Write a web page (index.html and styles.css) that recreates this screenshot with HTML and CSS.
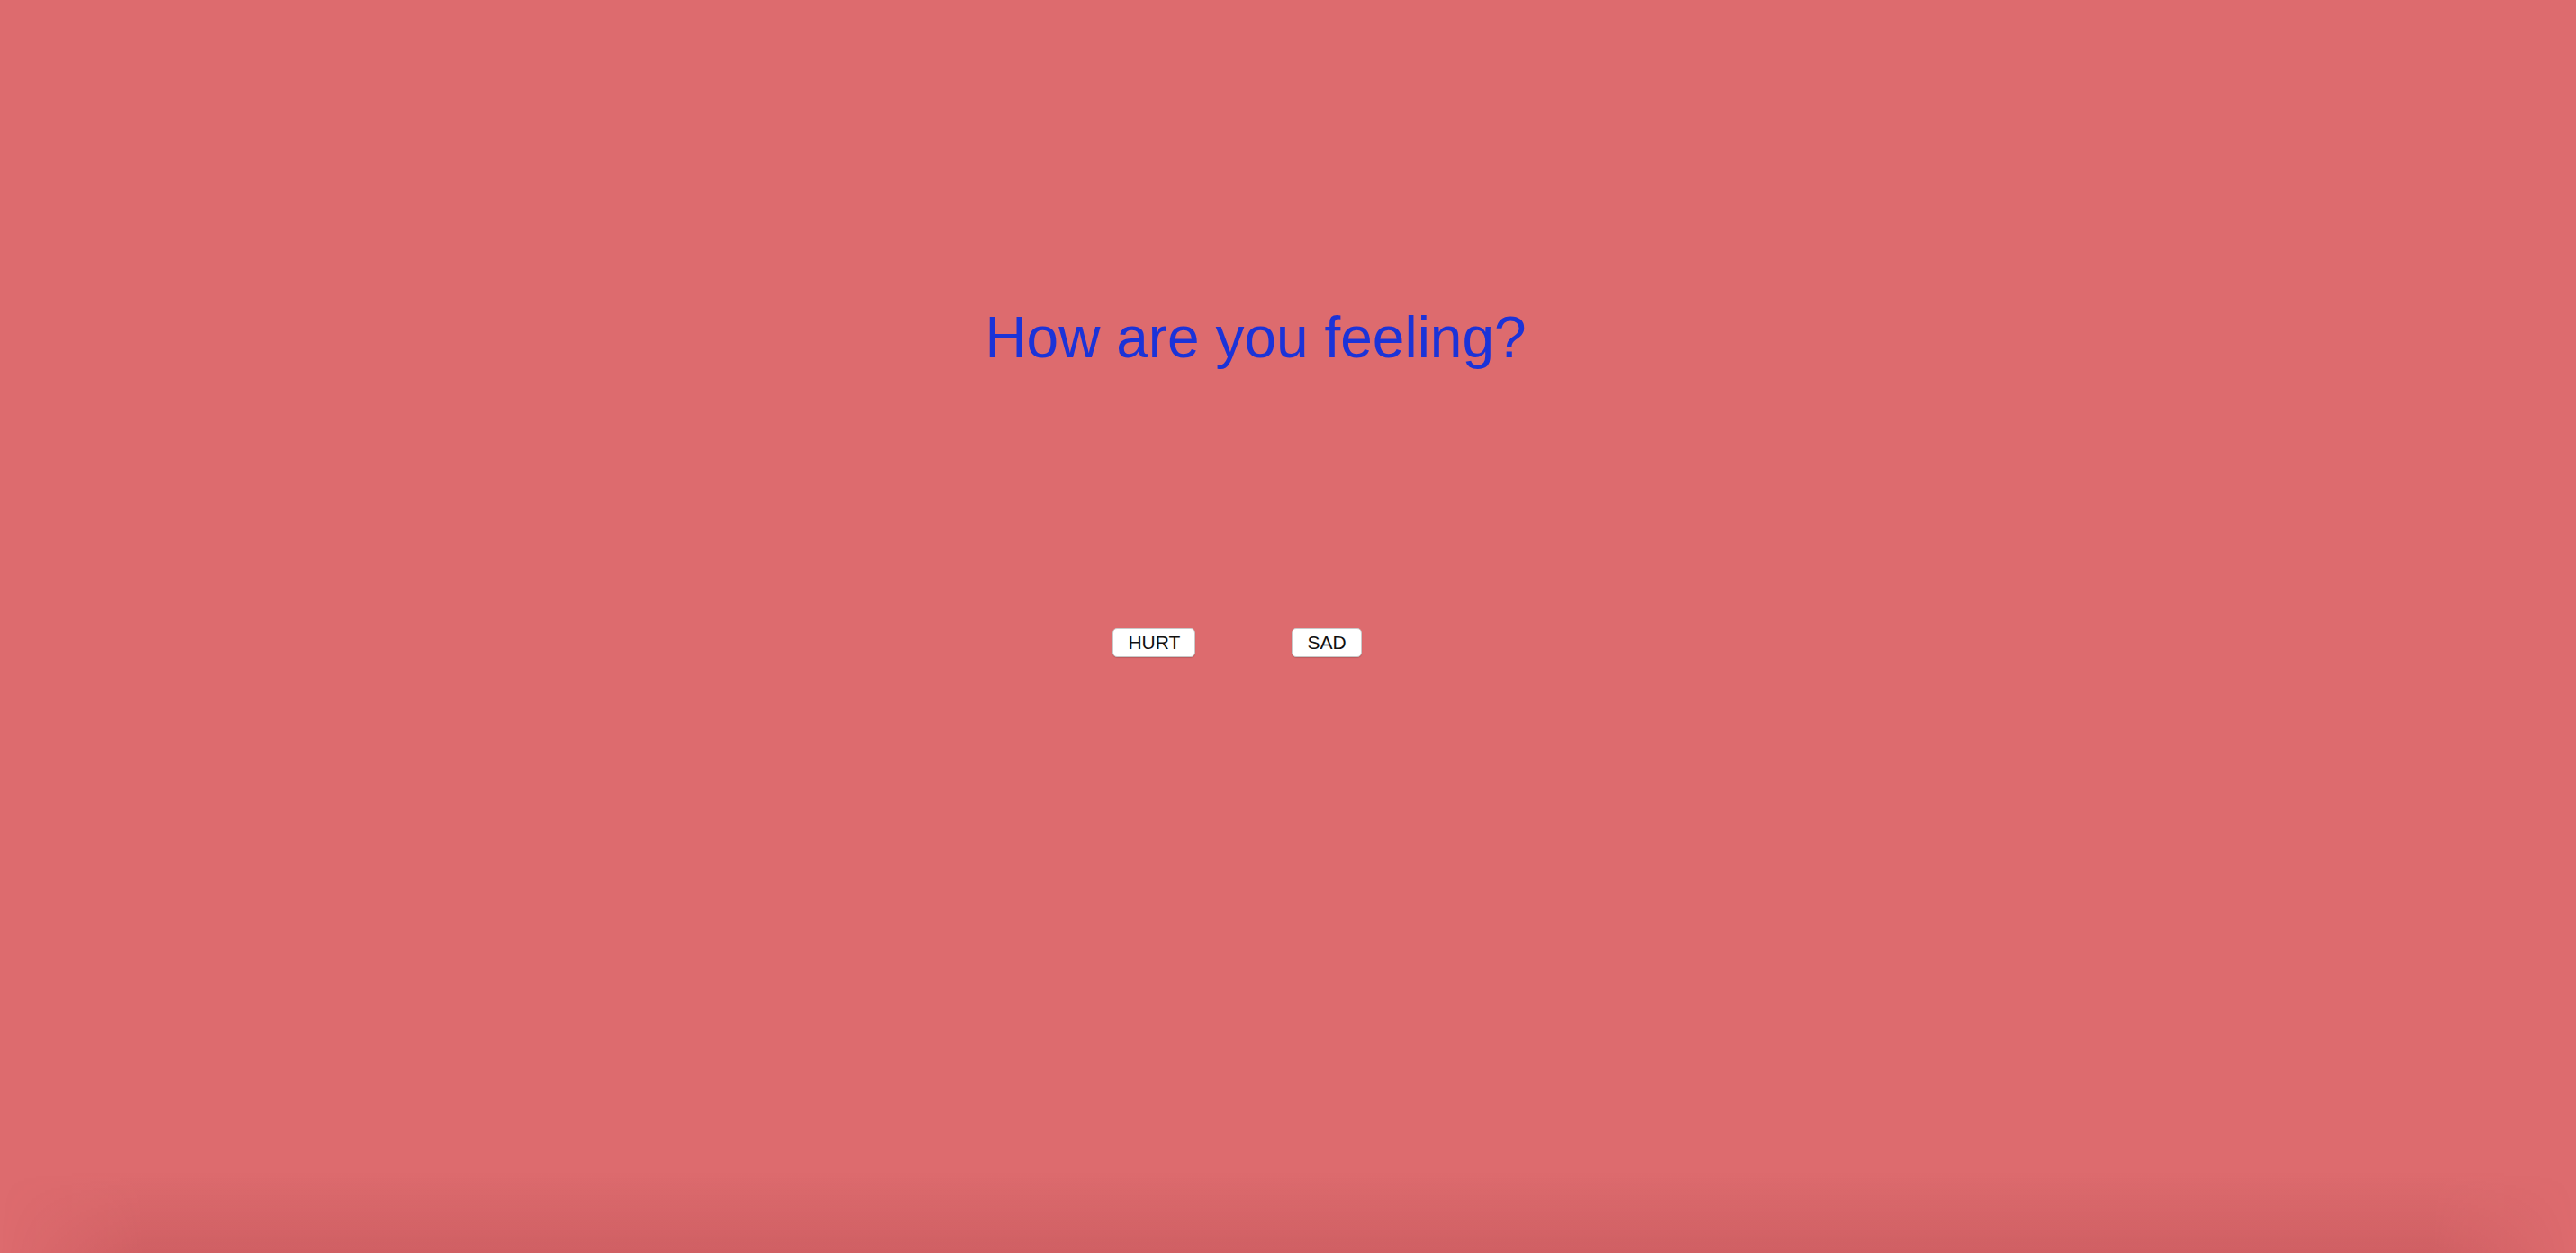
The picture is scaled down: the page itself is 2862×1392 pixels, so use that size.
FILE: index.html
```html
<!DOCTYPE html>
<html lang="en">
<head>
<meta charset="utf-8">
<title>How are you feeling?</title>
<link rel="stylesheet" href="styles.css">
</head>
<body>
<main class="page">
  <h1 class="question">How are you feeling?</h1>
  <div class="choices">
    <button class="choice" type="button">HURT</button>
    <button class="choice" type="button">SAD</button>
  </div>
</main>
<div class="bottom-shade"></div>
</body>
</html>
```

FILE: styles.css
```css
html, body {
  margin: 0;
  padding: 0;
  height: 100%;
}

body {
  background: #dd6b6e;
  font-family: "Liberation Sans", Arial, Helvetica, sans-serif;
  overflow: hidden;
  position: relative;
}

.page {
  padding-top: 339px;
  display: flex;
  flex-direction: column;
}

.question {
  margin: 0;
  font-size: 64px;
  font-weight: 400;
  line-height: 1.15;
  color: #1b33d8;
  text-align: center;
  padding-right: 72px;
}

.choices {
  margin-top: 285px;
  display: flex;
  justify-content: center;
  gap: 107px;
  padding-right: 113px;
}

.choice {
  height: 32px;
  padding: 0 16px;
  font-family: "Liberation Sans", Arial, Helvetica, sans-serif;
  font-size: 21px;
  line-height: 30px;
  color: #111;
  background: #ffffff;
  border: 1px solid #c9c9c9;
  border-radius: 5px;
  box-shadow: 0 1px 1px rgba(0, 0, 0, 0.15);
}

.bottom-shade {
  position: absolute;
  left: 0;
  right: 0;
  bottom: 0;
  height: 90px;
  background: linear-gradient(to bottom, rgba(120, 20, 30, 0) 0%, rgba(120, 20, 30, 0.13) 100%);
  -webkit-mask-image: linear-gradient(to right, transparent 0, #000 160px, #000 calc(100% - 160px), transparent 100%);
  mask-image: linear-gradient(to right, transparent 0, #000 160px, #000 calc(100% - 160px), transparent 100%);
  pointer-events: none;
}
```
